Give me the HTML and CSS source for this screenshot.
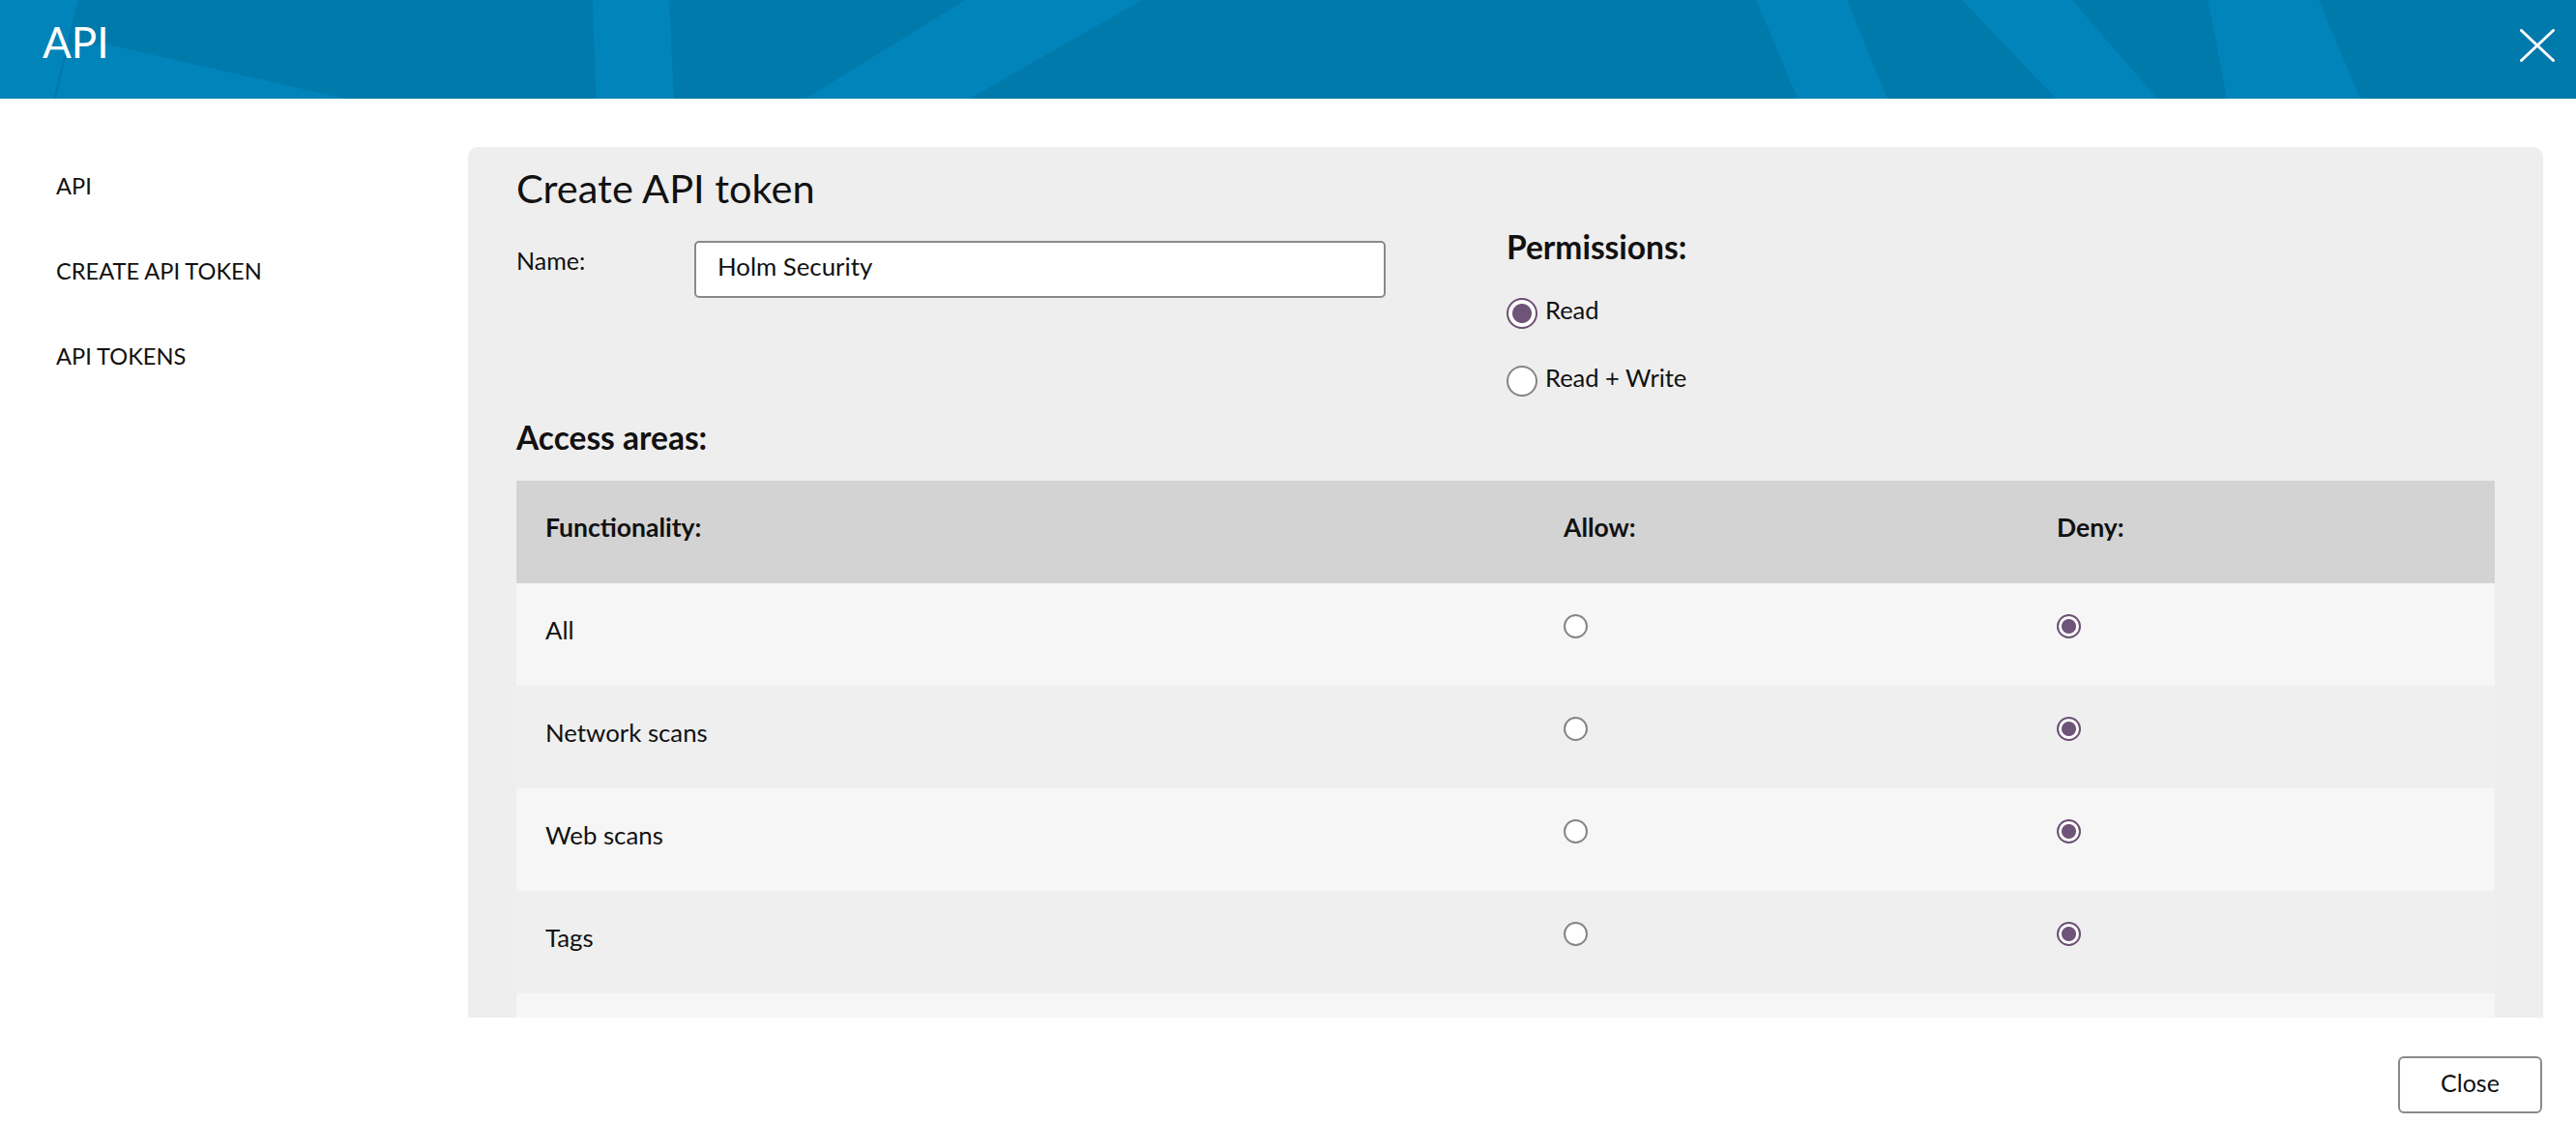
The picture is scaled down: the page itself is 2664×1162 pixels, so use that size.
FILE: index.html
```html
<!DOCTYPE html>
<html lang="en">
<head>
<meta charset="utf-8">
<title>API</title>
<link rel="stylesheet" href="styles.css">
</head>
<body>
<div class="modal">
  <header class="modal-header">
    <svg class="header-bg" viewBox="0 0 2664 102" preserveAspectRatio="none" aria-hidden="true">
      <rect x="0" y="0" width="2664" height="102" fill="#0079ab"/>
      <g fill="#0084b9">
        <polygon points="0,0 81,0 55,102 0,102"/>
        <polygon points="108,45 357,102 58,102 70,52"/>
        <polygon points="613,0 692,0 697,102 616,102"/>
        <polygon points="998,0 1181,0 1003,102 833,102"/>
        <polygon points="1816,0 1910,0 1952,102 1859,102"/>
        <polygon points="2029,0 2143,0 2231,102 2126,102"/>
        <polygon points="2283,0 2398,0 2441,102 2303,102"/>
      </g>
    </svg>
    <h1 class="modal-title">API</h1>
    <button class="modal-close" type="button" aria-label="Close">
      <svg viewBox="0 0 36 34" width="36" height="34" aria-hidden="true">
        <path d="M1.5 1.5 L34.5 32.5 M34.5 1.5 L1.5 32.5" stroke="#ffffff" stroke-width="3" stroke-linecap="round" fill="none"/>
      </svg>
    </button>
  </header>

  <div class="modal-body">
    <nav class="side-nav">
      <a class="side-link" href="#">API</a>
      <a class="side-link" href="#">CREATE API TOKEN</a>
      <a class="side-link" href="#">API TOKENS</a>
    </nav>

    <section class="panel">
      <h2 class="panel-title">Create API token</h2>
      <div class="form-top">
        <div class="name-field">
          <label class="field-label" for="token-name">Name:</label>
          <input class="text-input" id="token-name" type="text" value="Holm Security">
        </div>
        <div class="permissions">
          <h3 class="section-heading">Permissions:</h3>
          <label class="perm-option perm-first"><input class="radio radio-lg" type="radio" name="perm" checked><span>Read</span></label>
          <label class="perm-option perm-next"><input class="radio radio-lg" type="radio" name="perm"><span>Read + Write</span></label>
        </div>
      </div>

      <h3 class="section-heading access-heading">Access areas:</h3>
      <table class="access-table">
        <colgroup>
          <col class="col-func">
          <col class="col-allow">
          <col class="col-deny">
        </colgroup>
        <thead>
          <tr class="head-row">
            <th>Functionality:</th>
            <th>Allow:</th>
            <th>Deny:</th>
          </tr>
        </thead>
        <tbody>
          <tr class="row-light">
            <td>All</td>
            <td><input class="radio radio-sm" type="radio" name="a1"></td>
            <td><input class="radio radio-sm" type="radio" name="a1" checked></td>
          </tr>
          <tr class="row-dark">
            <td>Network scans</td>
            <td><input class="radio radio-sm" type="radio" name="a2"></td>
            <td><input class="radio radio-sm" type="radio" name="a2" checked></td>
          </tr>
          <tr class="row-light">
            <td>Web scans</td>
            <td><input class="radio radio-sm" type="radio" name="a3"></td>
            <td><input class="radio radio-sm" type="radio" name="a3" checked></td>
          </tr>
          <tr class="row-dark">
            <td>Tags</td>
            <td><input class="radio radio-sm" type="radio" name="a4"></td>
            <td><input class="radio radio-sm" type="radio" name="a4" checked></td>
          </tr>
          <tr class="row-light">
            <td></td>
            <td></td>
            <td></td>
          </tr>
        </tbody>
      </table>
    </section>
  </div>

  <footer class="modal-footer">
    <button class="btn-close" type="button">Close</button>
  </footer>
</div>
</body>
</html>
```

FILE: styles.css
```css
* {
  box-sizing: border-box;
}

html, body {
  margin: 0;
  padding: 0;
  background: #ffffff;
}

body {
  width: 2664px;
  height: 1162px;
  overflow: hidden;
  font-family: "Lato", "Open Sans", "Liberation Sans", sans-serif;
  color: #111111;
}

.modal {
  width: 2664px;
  height: 1162px;
}

/* Header */
.modal-header {
  position: relative;
  height: 102px;
  display: flex;
  align-items: flex-start;
  padding: 0 22px 0 44px;
  overflow: hidden;
}

.header-bg {
  position: absolute;
  left: 0;
  top: 0;
  width: 100%;
  height: 102px;
  display: block;
}

.modal-title {
  position: relative;
  margin: 17px 0 0 0;
  font-size: 44px;
  line-height: 53px;
  font-weight: 400;
  color: #ffffff;
}

.modal-close {
  position: relative;
  margin: 30px 0 0 auto;
  padding: 0;
  border: 0;
  background: transparent;
  width: 36px;
  height: 34px;
  cursor: pointer;
}

.modal-close svg {
  display: block;
}

/* Body */
.modal-body {
  display: flex;
  padding-top: 50px;
  height: 950px;
}

.side-nav {
  width: 484px;
  flex: none;
  padding: 25px 0 0 58px;
  display: flex;
  flex-direction: column;
}

.side-link {
  display: block;
  height: 88px;
  font-size: 23.6px;
  line-height: 30px;
  color: #111111;
  text-decoration: none;
}

.panel {
  width: 2146px;
  height: 900px;
  flex: none;
  background: #eeeeee;
  border-radius: 10px 10px 0 0;
  padding: 18px 50px 0 50px;
  overflow: hidden;
}

.panel-title {
  margin: 0;
  font-size: 41.5px;
  line-height: 48px;
  font-weight: 400;
}

.form-top {
  display: flex;
  align-items: flex-start;
  margin-top: 19px;
}

.name-field {
  display: flex;
  align-items: flex-start;
  width: 899px;
  padding-top: 12px;
}

.field-label {
  width: 184px;
  flex: none;
  margin-top: 5px;
  font-size: 25px;
  line-height: 30px;
}

.text-input {
  width: 715px;
  height: 59px;
  border: 2px solid #8a8a8a;
  border-radius: 5px;
  background: #ffffff;
  padding: 0 22px 8px 22px;
  font-family: "Lato", "Open Sans", "Liberation Sans", sans-serif;
  font-size: 25.8px;
  color: #111111;
  outline: none;
}

.permissions {
  margin-left: 125px;
  display: flex;
  flex-direction: column;
}

.section-heading {
  margin: 0;
  font-size: 33.5px;
  line-height: 37px;
  font-weight: 700;
}

.perm-option {
  display: flex;
  align-items: flex-start;
  gap: 8px;
  font-size: 25.5px;
  line-height: 30px;
}

.perm-first {
  margin-top: 31px;
}

.perm-next {
  margin-top: 35px;
}

/* Radios */
.radio {
  -webkit-appearance: none;
  appearance: none;
  margin: 0;
  flex: none;
  border-radius: 50%;
  border: 2px solid #858585;
  background: #ffffff;
  display: block;
}

.radio-lg {
  width: 32px;
  height: 32px;
  margin-top: 3px;
}

.radio-lg:checked {
  border: 2px solid #6b4f72;
  background: radial-gradient(circle, #6f5479 0, #6f5479 9.5px, #ffffff 10.5px);
}

.radio-sm {
  width: 25px;
  height: 25px;
  margin-top: -1px;
}

.radio-sm:checked {
  border: 2px solid #6b4f72;
  background: radial-gradient(circle, #6f5479 0, #6f5479 7px, #ffffff 8px);
}

/* Table */
.access-heading {
  margin-top: 24px;
}

.access-table {
  margin-top: 26px;
  width: 2046px;
  table-layout: fixed;
  border-collapse: collapse;
  border-spacing: 0;
}

.col-func { width: 1053px; }
.col-allow { width: 510px; }
.col-deny { width: 483px; }

.access-table tr {
  height: 106px;
}

.access-table th,
.access-table td {
  padding: 33px 30px 0 30px;
  vertical-align: top;
  text-align: left;
  font-size: 25.8px;
  line-height: 30px;
}

.access-table th {
  font-size: 26.5px;
  font-weight: 700;
}

.head-row {
  background: #d3d3d3;
}

.row-light {
  background: #f6f6f6;
}

.row-dark {
  background: #efefef;
}

/* Footer */
.modal-footer {
  display: flex;
  justify-content: flex-end;
  padding: 40px 35px 0 0;
}

.btn-close {
  width: 149px;
  height: 59px;
  border: 2px solid #8a8a8a;
  border-radius: 6px;
  background: #ffffff;
  padding: 0 0 5px 0;
  font-family: "Lato", "Open Sans", "Liberation Sans", sans-serif;
  font-size: 25px;
  color: #111111;
  cursor: pointer;
}
```
